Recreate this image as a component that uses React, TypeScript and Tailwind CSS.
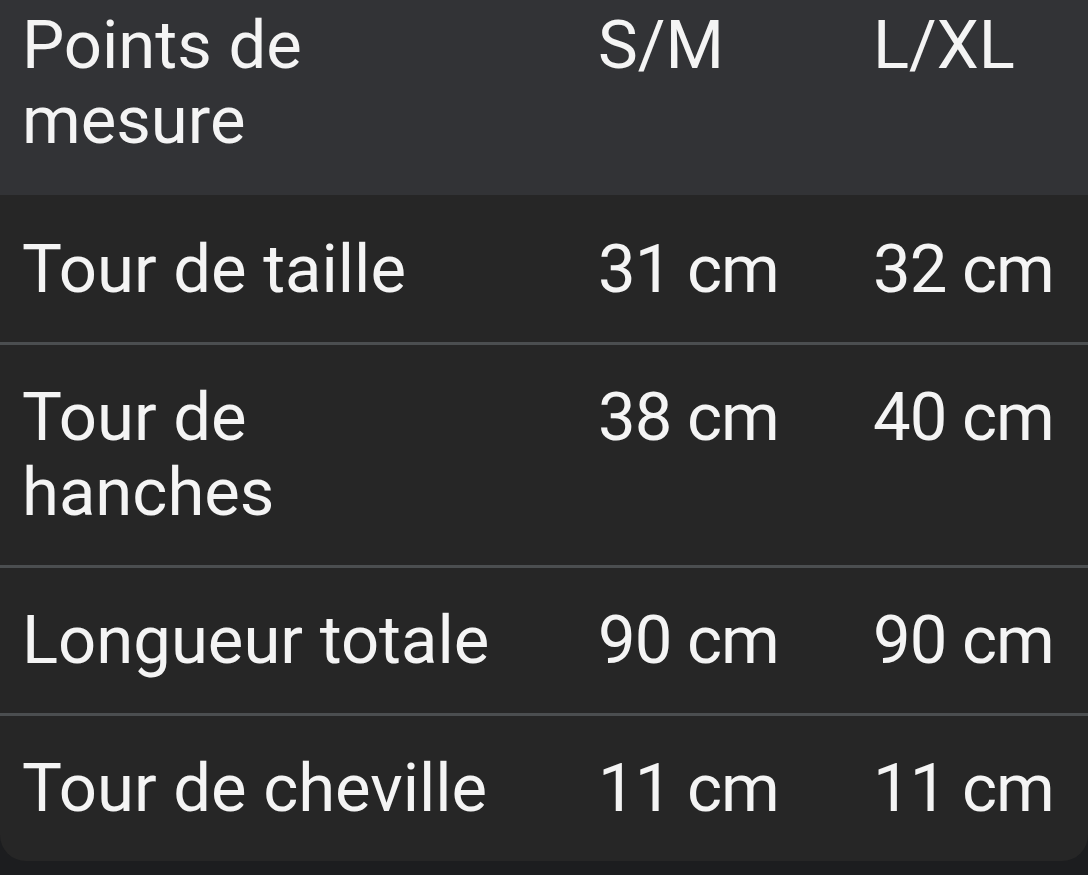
import React from 'react';

const rows: [string, string, string][] = [
  ['Tour de taille', '31 cm', '32 cm'],
  ['Tour de hanches', '38 cm', '40 cm'],
  ['Longueur totale', '90 cm', '90 cm'],
  ['Tour de cheville', '11 cm', '11 cm'],
];

const cols = 'grid grid-cols-[576px_275px_1fr] px-[22px]';

export default function App() {
  return (
    <div
      className="w-[1088px] h-[875px] bg-[#1c1d1f] overflow-hidden text-[#f4f4f4] text-[67px] leading-[75px]"
      style={{ fontFamily: 'Roboto, "Noto Sans", sans-serif' }}
    >
      <div className="bg-[#262626] rounded-b-[26px] overflow-hidden">
        {/* header row, top is cut off in the shot */}
        <div className={`${cols} bg-[#323336] pt-[8px] pb-[37px]`}>
          <div className="pr-[260px]">Points de mesure</div>
          <div>S/M</div>
          <div>L/XL</div>
        </div>

        {rows.map(([label, sm, lxl], i) => (
          <div key={label} className={i > 0 ? 'border-t-[3px] border-[#4b4e50]' : 'mt-[2px]'}>
            <div className={`${cols} py-[35px]`}>
              <div className={label === 'Tour de hanches' ? 'pr-[300px]' : ''}>{label}</div>
              <div className="tracking-[-1px]">{sm}</div>
              <div className="tracking-[-1px]">{lxl}</div>
            </div>
          </div>
        ))}
      </div>
    </div>
  );
}
